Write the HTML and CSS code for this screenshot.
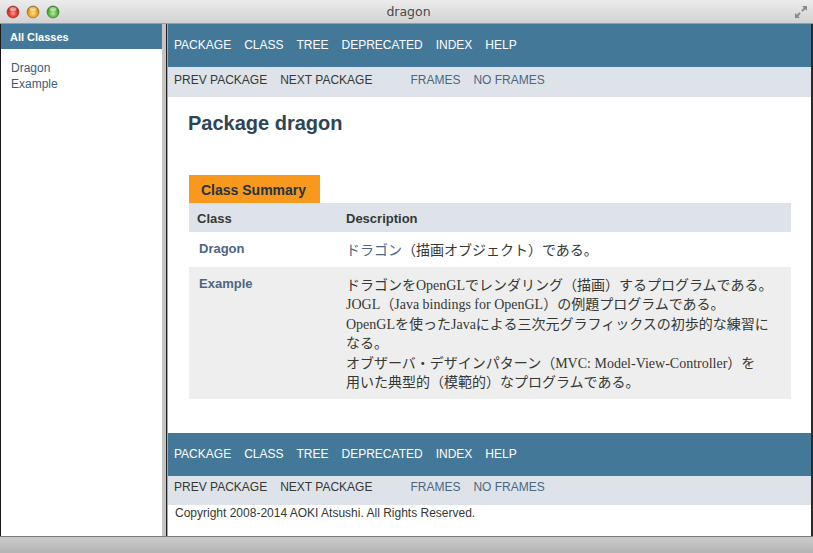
FILE: index.html
```html
<!DOCTYPE html>
<html lang="ja">
<head>
<meta charset="utf-8">
<title>dragon</title>
<link rel="stylesheet" href="styles.css">
</head>
<body>
<div class="window">
  <div class="titlebar">
    <div class="lights">
      <svg width="60" height="14" viewBox="0 0 60 14">
        <defs>
          <radialGradient id="gr" cx="50%" cy="60%" r="60%"><stop offset="0" stop-color="#ff9a8a"/><stop offset="0.6" stop-color="#e0302a"/><stop offset="1" stop-color="#9a1a14"/></radialGradient>
          <radialGradient id="gy" cx="50%" cy="60%" r="60%"><stop offset="0" stop-color="#ffe38a"/><stop offset="0.6" stop-color="#e8a21c"/><stop offset="1" stop-color="#a0680c"/></radialGradient>
          <radialGradient id="gg" cx="50%" cy="60%" r="60%"><stop offset="0" stop-color="#b8f0a0"/><stop offset="0.6" stop-color="#56b83a"/><stop offset="1" stop-color="#2c7a1a"/></radialGradient>
        </defs>
        <circle cx="7" cy="7" r="6" fill="url(#gr)" stroke="#8a3a36" stroke-width="0.6"/>
        <ellipse cx="7" cy="4" rx="3.5" ry="2" fill="#fff" opacity="0.5"/>
        <circle cx="27" cy="7" r="6" fill="url(#gy)" stroke="#8a6a2a" stroke-width="0.6"/>
        <ellipse cx="27" cy="4" rx="3.5" ry="2" fill="#fff" opacity="0.5"/>
        <circle cx="47" cy="7" r="6" fill="url(#gg)" stroke="#3a6a2a" stroke-width="0.6"/>
        <ellipse cx="47" cy="4" rx="3.5" ry="2" fill="#fff" opacity="0.5"/>
      </svg>
    </div>
    <div class="wtitle">dragon</div>
    <div class="resize">
      <svg width="16" height="16" viewBox="0 0 16 16">
        <path d="M9 2h5v5l-1.8-1.8-2.6 2.6-1.4-1.4 2.6-2.6z" fill="#8a8a8a"/>
        <path d="M7 14H2V9l1.8 1.8 2.6-2.6 1.4 1.4-2.6 2.6z" fill="#8a8a8a"/>
      </svg>
    </div>
  </div>
  <div class="frames">
    <div class="leftframe">
      <div class="lbar">All Classes</div>
      <ul class="classlist">
        <li><a href="#">Dragon</a></li>
        <li><a href="#">Example</a></li>
      </ul>
    </div>
    <div class="divider"></div>
    <div class="rightframe">
      <div class="topnav">
        <span>PACKAGE</span><span>CLASS</span><span>TREE</span><span>DEPRECATED</span><span>INDEX</span><span>HELP</span>
      </div>
      <div class="subnav">
        <span>PREV PACKAGE</span><span>NEXT PACKAGE</span>
        <a class="frames-link first" href="#">FRAMES</a><a class="frames-link" href="#">NO FRAMES</a>
      </div>
      <div class="header"><h1 class="title">Package dragon</h1></div>
      <div class="summary">
        <div class="tab">Class Summary</div>
        <div class="table">
          <div class="th first">Class</div>
          <div class="th">Description</div>
          <div class="td first row"><a href="#">Dragon</a></div>
          <div class="td desc row"><a class="jlink" href="#">ドラゴン</a>（描画オブジェクト）である。</div>
          <div class="td first alt"><a href="#">Example</a></div>
          <div class="td desc alt">ドラゴンをOpenGLでレンダリング（描画）するプログラムである。<br>JOGL（Java bindings for OpenGL）の例題プログラムである。<br>OpenGLを使ったJavaによる三次元グラフィックスの初歩的な練習に<br>なる。<br>オブザーバ・デザインパターン（MVC: Model-View-Controller）を<br>用いた典型的（模範的）なプログラムである。</div>
        </div>
      </div>
      <div class="topnav bottom">
        <span>PACKAGE</span><span>CLASS</span><span>TREE</span><span>DEPRECATED</span><span>INDEX</span><span>HELP</span>
      </div>
      <div class="subnav lower">
        <span>PREV PACKAGE</span><span>NEXT PACKAGE</span>
        <a class="frames-link first" href="#">FRAMES</a><a class="frames-link" href="#">NO FRAMES</a>
      </div>
      <p class="legal">Copyright 2008-2014 AOKI Atsushi. All Rights Reserved.</p>
    </div>
  </div>
  <div class="statusbar"></div>
</div>
</body>
</html>
```
FILE: styles.css
```css
* { box-sizing: border-box; }
html, body { margin: 0; padding: 0; }
body {
  width: 813px;
  height: 553px;
  overflow: hidden;
  background: #ffffff;
  font-family: "Liberation Sans", Arial, sans-serif;
}
.window {
  display: flex;
  flex-direction: column;
  width: 813px;
  height: 553px;
}
.titlebar {
  height: 24px;
  flex: none;
  display: flex;
  align-items: center;
  background: linear-gradient(#ececec, #d2d2d2);
  border-bottom: 1px solid #9c9c9c;
  position: relative;
}
.lights { padding-left: 6px; display: flex; width: 100px; padding-top: 1px; }
.wtitle {
  flex: 1;
  text-align: center;
  font-family: "DejaVu Sans", sans-serif;
  font-size: 12.5px;
  color: #4a4a4a;
  padding-left: 4px;
}
.resize { width: 100px; display: flex; justify-content: flex-end; padding-right: 4px; padding-top: 1px; }

.frames {
  flex: 1;
  display: flex;
  min-height: 0;
}
.leftframe {
  width: 162px;
  flex: none;
  background: #ffffff;
  border-left: 1px solid #1a1a1a;
}
.lbar {
  height: 25px;
  background: #447899;
  color: #ffffff;
  font-weight: bold;
  font-size: 11px;
  display: flex;
  align-items: center;
  padding-left: 9px;
}
.classlist {
  list-style: none;
  margin: 0;
  padding: 11px 0 0 10px;
  font-size: 12px;
  line-height: 16px;
}
.classlist a { color: #3e5b78; text-decoration: none; }

.divider {
  width: 6px;
  flex: none;
  background: linear-gradient(to right, #c4c4c4 0, #c4c4c4 4px, #1e1e1e 4px, #1e1e1e 5px, #a8a8a8 5px);
}
.rightframe {
  flex: 1;
  background: #ffffff;
  border-right: 2px solid #2a2a2a;
  display: flex;
  flex-direction: column;
}
.topnav {
  height: 43px;
  flex: none;
  background: #447899;
  display: flex;
  align-items: center;
  padding-left: 6px;
  gap: 13px;
  color: #ffffff;
  font-size: 12px;
  padding-bottom: 1px;
}
.topnav.bottom { margin-top: 34px; }
.subnav {
  height: 30px;
  flex: none;
  background: #dee3e9;
  display: flex;
  align-items: center;
  padding-left: 6px;
  padding-bottom: 4px;
  font-size: 12px;
  color: #353833;
}
.subnav.lower { height: 29px; padding-bottom: 6px; }
.subnav span + span { margin-left: 13px; }
.frames-link { color: #4a6782; text-decoration: none; }
.frames-link.first { margin-left: 38px; }
.frames-link + .frames-link { margin-left: 13px; }

.header { padding: 15px 0 0 20px; }
.title {
  margin: 0;
  font-size: 20px;
  line-height: 23px;
  font-weight: bold;
  color: #2c4557;
}
.summary { margin: 40px 20px 0 21px; }
.tab {
  display: inline-flex;
  align-items: center;
  height: 28px;
  padding: 1px 14px 0 12px;
  background: #f8981d;
  color: #253441;
  font-weight: bold;
  font-size: 14px;
}
.table {
  display: grid;
  grid-template-columns: 150px 1fr;
}
.th {
  height: 29px;
  background: #dee3e9;
  font-weight: bold;
  font-size: 13px;
  color: #353833;
  display: flex;
  align-items: center;
  padding: 2px 3px 0 7px;
}
.th.first { padding-left: 8px; }
.td {
  padding: 8px 3px 6px 7px;
  font-size: 13px;
  line-height: 19.5px;
  color: #353833;
}
.td.first { padding-left: 10px; padding-top: 7px; }
.td.first a { color: #4a6782; font-weight: bold; text-decoration: none; }
.td.desc {
  font-family: "Liberation Serif", "Noto Sans CJK JP", serif;
  font-size: 14px;
  padding-top: 9px;
}
.jlink { color: #4a6782; text-decoration: none; }
.row { background: #ffffff; }
.alt { background: #eeeeef; }

.legal {
  margin: 0;
  padding: 2px 0 0 7px;
  font-size: 12px;
  line-height: 12px;
  color: #353833;
}
.statusbar {
  height: 17px;
  flex: none;
  background: linear-gradient(#cbcbcb, #b4b4b4);
  border-top: 1px solid #7a7a7a;
}
```
